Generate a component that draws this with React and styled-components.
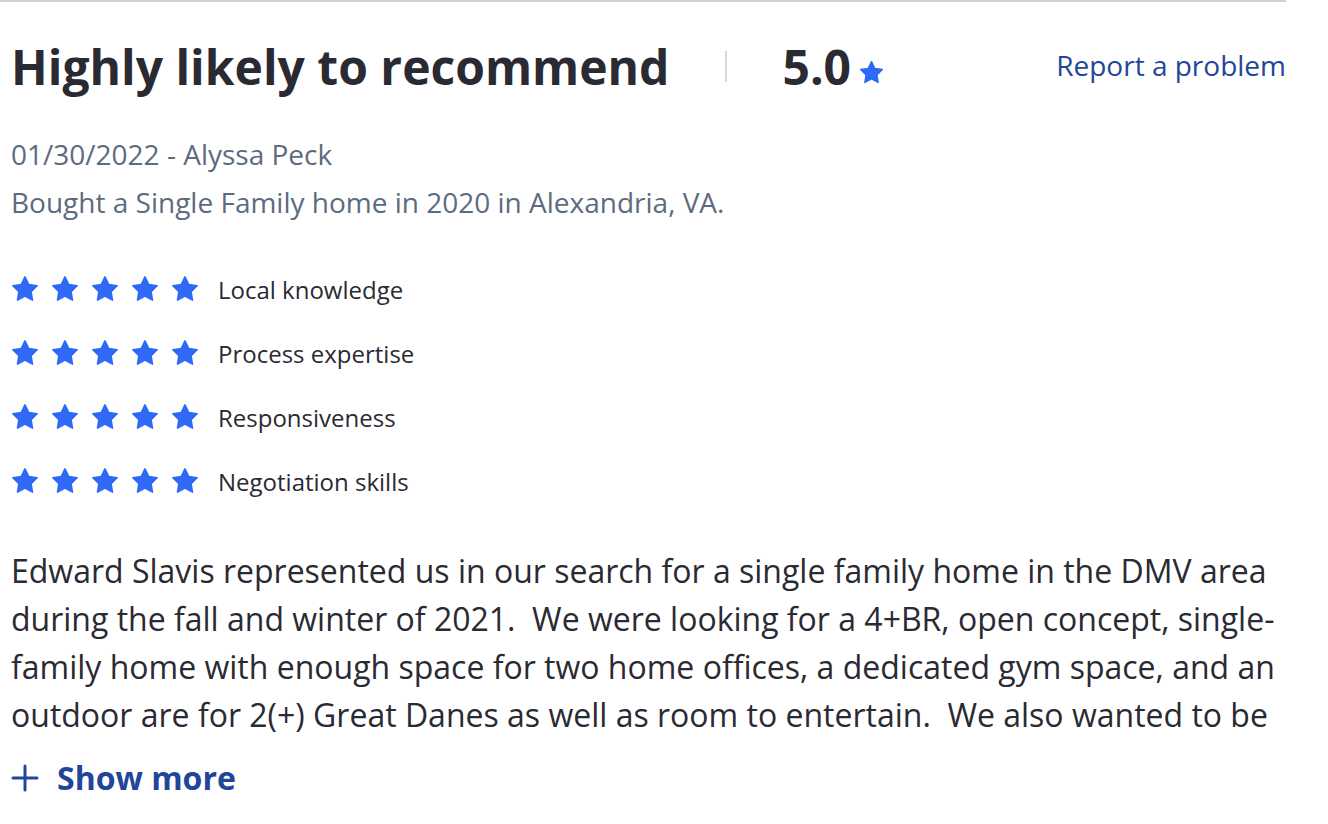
import React from 'react'
import styled, { createGlobalStyle } from 'styled-components'

const GlobalStyle = createGlobalStyle`
  body {
    margin: 0;
    background: #fff;
    font-family: "Open Sans", "Liberation Sans", sans-serif;
    color: #2a2a33;
  }
`

const Review = styled.article`
  width: 1275px;
  padding: 0 0 0 11px;
  border-top: 2px solid #d1d1d5;
`

const Header = styled.header`
  display: flex;
  align-items: center;
  height: 132px;
  margin-top: -2px;
`

const Title = styled.h1`
  margin: 0;
  font-size: 48px;
  font-weight: 700;
  color: #2a2a33;
`

const Divider = styled.span`
  width: 2px;
  height: 31px;
  background: #d8d8dc;
  margin: 0 55px 0 56px;
`

const Score = styled.div`
  display: flex;
  align-items: center;
  font-size: 48px;
  font-weight: 700;
  gap: 8px;
`

const ScoreStar = styled.span`
  display: flex;
  margin-top: 12px;
`

const ReportLink = styled.a`
  margin-left: auto;
  font-size: 28px;
  color: #1f4699;
  text-decoration: none;
  margin-top: -2px;
`

const MetaBlock = styled.div`
  margin-top: -2px;
`

const Meta = styled.p`
  margin: 0;
  font-size: 28px;
  line-height: 48px;
  color: #5d6b80;
`

const Ratings = styled.ul`
  list-style: none;
  margin: 47px 0 0;
  padding: 0;
  display: flex;
  flex-direction: column;
  gap: 32px;
`

const RatingRow = styled.li`
  display: flex;
  align-items: center;
  height: 32px;
`

const Stars = styled.span`
  display: flex;
  gap: 12px;
  margin-right: 19px;
`

const Label = styled.span`
  font-size: 24px;
`

const Body = styled.p`
  margin: 50px 0 0;
  font-size: 32px;
  line-height: 48px;
  white-space: pre-wrap;
  width: 1285px;
`

const ShowMore = styled.button`
  display: flex;
  align-items: center;
  gap: 18px;
  margin-top: 17px;
  padding: 0;
  border: 0;
  background: none;
  font-family: inherit;
  font-size: 32px;
  font-weight: 700;
  color: #1f4699;
  cursor: pointer;
`

const Star = ({ size = 28 }) => (
  <svg width={size} height={size} viewBox="0 0 24 24">
    <path
      d="M12 1.6l3.2 6.6 7.2 1-5.2 5.1 1.2 7.2L12 18.1l-6.4 3.4 1.2-7.2L1.6 9.2l7.2-1z"
      fill="#2f6af6"
      stroke="#2f6af6"
      strokeWidth="1.4"
      strokeLinejoin="round"
    />
  </svg>
)

const Plus = () => (
  <svg width="28" height="28" viewBox="0 0 28 28">
    <path d="M14 2v24M2 14h24" stroke="#1f4699" strokeWidth="3" strokeLinecap="round" />
  </svg>
)

const ratings = ['Local knowledge', 'Process expertise', 'Responsiveness', 'Negotiation skills']

const text =
  'Edward Slavis represented us in our search for a single family home in the DMV area during the fall and winter of 2021.  We were looking for a 4+BR, open concept, single-family home with enough space for two home offices, a dedicated gym space, and an outdoor are for 2(+) Great Danes as well as room to entertain.  We also wanted to be'

export default function App() {
  return (
    <>
      <GlobalStyle />
      <Review>
        <Header>
          <Title>Highly likely to recommend</Title>
          <Divider />
          <Score>
            5.0
            <ScoreStar><Star size={25} /></ScoreStar>
          </Score>
          <ReportLink href="#">Report a problem</ReportLink>
        </Header>
        <MetaBlock>
          <Meta>01/30/2022 - Alyssa Peck</Meta>
          <Meta>Bought a Single Family home in 2020 in Alexandria, VA.</Meta>
        </MetaBlock>
        <Ratings>
          {ratings.map(r => (
            <RatingRow key={r}>
              <Stars>
                {[0, 1, 2, 3, 4].map(i => <Star key={i} />)}
              </Stars>
              <Label>{r}</Label>
            </RatingRow>
          ))}
        </Ratings>
        <Body>{text}</Body>
        <ShowMore>
          <Plus />
          Show more
        </ShowMore>
      </Review>
    </>
  )
}
